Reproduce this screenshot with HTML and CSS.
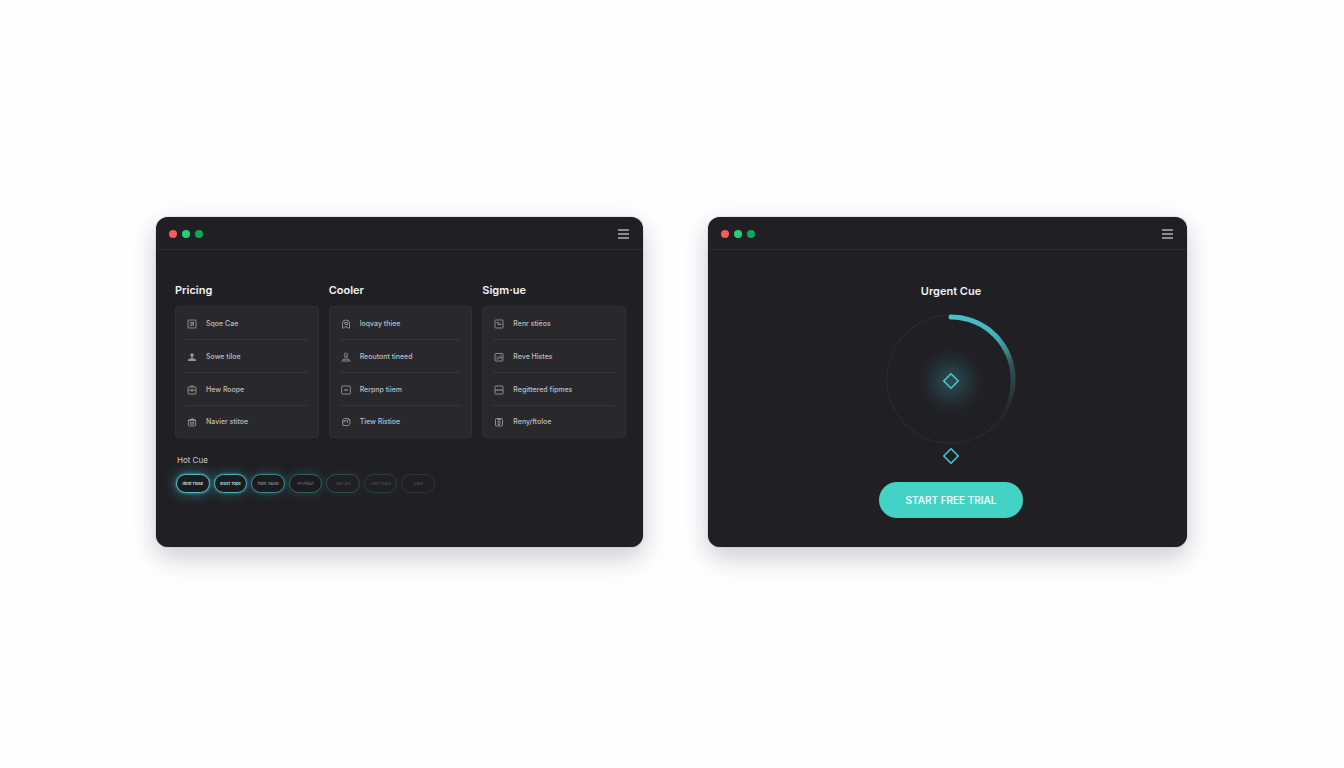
FILE: index.html
```html
<!DOCTYPE html>
<html lang="en">
<head>
<meta charset="utf-8">
<meta name="viewport" content="width=device-width, initial-scale=1">
<title>Hot Cue</title>
<link rel="stylesheet" href="styles.css">
</head>
<body>
<main class="stage">
  <section class="window">
    <header class="titlebar">
      <span class="dot dot-red"></span><span class="dot dot-green"></span><span class="dot dot-dark"></span>
      <button class="menu" aria-label="Menu"><svg viewBox="0 0 11 10"><path d="M0 1h11M0 5h11M0 9h11"/></svg></button>
    </header>
    <div class="content">
      <div class="columns">
        <section class="column">
          <h2 class="heading">Pricing</h2>
          <ul class="card">
            <li class="row"><svg class="icon" viewBox="0 0 10 10"><rect x="1" y="1" width="8" height="8" rx="1"/><path d="M3 3.500h4M3 5h4M3 6.700h2M6.200 3v4"/></svg>Sqoe Cae</li>
            <li class="row"><svg class="icon" viewBox="0 0 10 10"><circle class="solid" cx="5" cy="3" r="1.800"/><path class="solid" d="M4.300 4h1.400v2.500H4.300zM1 9V8q0-1.500 2.500-1.500h3Q9 6.500 9 8v1z"/></svg>Sowe tiloe</li>
            <li class="row"><svg class="icon" viewBox="0 0 10 10"><rect x="1" y="2" width="8" height="7" rx="1"/><path d="M3.500 2V1h3v1M1 5.200h8M5 3.500V7"/></svg>Hew Roope</li>
            <li class="row"><svg class="icon" viewBox="0 0 10 10"><rect x="1.500" y="2.500" width="7" height="6.500" rx="1"/><path d="M1 3.500h8M4 2.500 5.500 1l1 1.500M3.500 5.500h3v1.700h-3z"/></svg>Navier stitoe</li>
          </ul>
        </section>
        <section class="column">
          <h2 class="heading">Cooler</h2>
          <ul class="card">
            <li class="row"><svg class="icon" viewBox="0 0 10 10"><path d="M1.500 9V4Q1.500 1 5 1t3.500 3v5H6.500L5 7 3.500 9zM3.500 5V3.500h3V5M4 5.500h3"/></svg>Ioqvay thiee</li>
            <li class="row"><svg class="icon" viewBox="0 0 10 10"><circle cx="5" cy="2.800" r="1.700"/><path d="M4 4.500v1.500M6 4.500v1.500M1 9q0-2 4-2t4 2z"/></svg>Reoutont tineed</li>
            <li class="row"><svg class="icon" viewBox="0 0 10 10"><rect x="0.700" y="1" width="8.600" height="8" rx="0.500"/><path d="M3 5h4M5 4.200v1.600"/></svg>Rerpnp tiiem</li>
            <li class="row"><svg class="icon" viewBox="0 0 10 10"><path d="M2 8.500 1.500 5Q1 2 3.500 1.500h4L9 3v3L7.500 8.500zM3 6V3.500h3.500V6M7 2l2 2"/></svg>Tiew Ristioe</li>
          </ul>
        </section>
        <section class="column">
          <h2 class="heading">Sigm·ue</h2>
          <ul class="card">
            <li class="row"><svg class="icon" viewBox="0 0 10 10"><rect x="1" y="1" width="8" height="8" rx="0.500"/><path d="M2.500 3.500h2M4 3v2.500h3.500M6 4v1.500"/></svg>Renr stiéos</li>
            <li class="row"><svg class="icon" viewBox="0 0 10 10"><rect x="1" y="1.500" width="8" height="7.500" rx="1"/><path d="M2.500 5h1.500M2.500 7h1.500l3.500-4M6 5.500h1.500V7"/></svg>Reve Histes</li>
            <li class="row"><svg class="icon" viewBox="0 0 10 10"><rect x="1" y="1" width="8" height="8" rx="0.500"/><path d="M1 5.200h8M3 4.500h1M6 4.500h1"/></svg>Regittered fipmes</li>
            <li class="row"><svg class="icon" viewBox="0 0 10 10"><rect x="1.500" y="1.500" width="7" height="7.500" rx="1"/><path d="M3.500 1v1.500h3V1M4 4v3.500M6 4v3.500M4 4h2M4 7.500h2M1 5h1M8 5h1"/></svg>Reny/ftoloe</li>
          </ul>
        </section>
      </div>
      <h3 class="subheading">Hot Cue</h3>
      <div class="pills">
        <button class="pill pill-1">Itent Tiuse</button>
        <button class="pill pill-2">Sreet Tope</button>
        <button class="pill pill-3">Ttent Tause</button>
        <button class="pill pill-4">Ht-Piiuot</button>
        <button class="pill pill-5">Swt Jns</button>
        <button class="pill pill-6">Lent Teaps</button>
        <button class="pill pill-7">Iowsi</button>
      </div>
    </div>
  </section>

  <section class="window">
    <header class="titlebar">
      <span class="dot dot-red"></span><span class="dot dot-green"></span><span class="dot dot-dark"></span>
      <button class="menu" aria-label="Menu"><svg viewBox="0 0 11 10"><path d="M0 1h11M0 5h11M0 9h11"/></svg></button>
    </header>
    <div class="cue">
      <h2 class="heading">Urgent Cue</h2>
      <svg class="dial" viewBox="0 0 130 130">
        <defs>
          <linearGradient id="arc" gradientUnits="userSpaceOnUse" x1="65" y1="0" x2="82" y2="130">
            <stop offset="0" stop-color="#46c3ca"/>
            <stop offset=".2" stop-color="#43b4bb"/>
            <stop offset=".32" stop-color="#3b8c94"/>
            <stop offset=".44" stop-color="#2f5259"/>
            <stop offset=".65" stop-color="#2a3a3f"/>
            <stop offset=".9" stop-color="#25292d" stop-opacity="0"/>
          </linearGradient>
          <radialGradient id="glow">
            <stop offset="0" stop-color="#2c5d65" stop-opacity=".8"/>
            <stop offset=".4" stop-color="#284a53" stop-opacity=".55"/>
            <stop offset=".7" stop-color="#24363e" stop-opacity=".3"/>
            <stop offset="1" stop-color="#202026" stop-opacity="0"/>
          </radialGradient>
        </defs>
        <circle cx="65" cy="67" r="38" fill="url(#glow)"/>
        <circle class="track" cx="65" cy="65" r="64"/>
        <path d="M65 .5A64.500 64.500 0 0 1 97.200 120.900A66 66 0 0 0 124.500 65A59.500 59.500 0 0 0 65 5.500A2.500 2.500 0 0 1 65 .5Z" fill="url(#arc)"/>
        <path class="diamond" d="M65 59.800 72.200 67 65 74.200 57.800 67Z"/>
      </svg>
      <svg class="marker" viewBox="0 0 16 16"><path class="diamond" d="M8 .8 15.200 8 8 15.200.8 8Z"/></svg>
      <button class="trial">START FREE TRIAL</button>
    </div>
  </section>
</main>
</body>
</html>
```
FILE: styles.css
```css
* { box-sizing: border-box; }

body {
  margin: 0;
  background: #fefdff;
  font-family: Inter, "Liberation Sans", sans-serif;
  color: #f2f2f4;
}

button {
  margin: 0;
  padding: 0;
  border: 0;
  background: none;
  font-family: inherit;
  cursor: pointer;
}

.stage {
  min-height: 100vh;
  padding: 40px 157px 44px 156px;
  display: grid;
  grid-template-columns: 487fr 479fr;
  gap: 65px;
  align-items: center;
}

.window {
  min-height: 330px;
  border-radius: 12px;
  background: #201f24;
  box-shadow: 0 0 1px #55545a, 0 12px 24px rgba(40, 30, 45, .17), 0 4px 30px rgba(40, 30, 45, .06);
}

.titlebar {
  height: 33px;
  padding: 1px 14px 0 13px;
  display: flex;
  align-items: center;
  gap: 5px;
  border-bottom: 1px solid #2c2b30;
}

.dot {
  width: 8px;
  height: 8px;
  border-radius: 50%;
}

.dot-red { background: #f45b58; }
.dot-green { background: #1fd275; }
.dot-dark { background: #10a658; }

.menu {
  margin-left: auto;
  width: 11px;
  height: 10px;
}

.menu svg {
  display: block;
  stroke: #b0b0b3;
  stroke-width: 1.4;
}

.content { padding: 32px 17px 24px 19px; }

.columns {
  display: grid;
  grid-template-columns: repeat(3, 1fr);
  gap: 10px;
}

.heading {
  margin: 0 0 8px;
  font-size: 11px;
  line-height: 16px;
  font-weight: 600;
}

.card {
  margin: 0;
  padding: 0 10px;
  list-style: none;
  border: 1px solid #302f35;
  border-radius: 4px;
  background: #29282d;
}

.row {
  height: 33px;
  padding: 1px 0 0 1px;
  display: flex;
  align-items: center;
  gap: 9px;
  border-bottom: 1px solid #37363b;
  font-size: 7px;
  line-height: 10px;
  font-weight: 500;
  color: #bebec0;
  white-space: nowrap;
}

.row:last-child {
  height: 31px;
  border-bottom: 0;
}

.icon {
  width: 10px;
  height: 10px;
  fill: none;
  stroke: #96969a;
  stroke-width: .9;
}

.icon .solid { fill: #96969a; stroke: none; }

.subheading {
  margin: 16px 0 8px 2px;
  font-size: 8px;
  line-height: 12px;
  font-weight: 400;
  color: #cecfd2;
}

.pills {
  margin-left: 1px;
  max-width: 259px;
  display: grid;
  grid-template-columns: repeat(7, 1fr);
  gap: 4px;
}

.pill {
  height: 19px;
  border: 1px solid #2c3439;
  border-radius: 10px;
  background: #1c1b20;
  font-size: 4px;
  line-height: 6px;
  color: #58585c;
  white-space: nowrap;
}

.pill-1 { border-color: #54bdc3; color: #d5eeee; font-weight: 600; box-shadow: 0 0 3px #3aa0a6, 0 0 14px rgba(45, 165, 170, .7); }
.pill-2 { border-color: #4bb1b6; color: #bce0df; font-weight: 600; box-shadow: 0 0 3px #31888d, 0 0 13px rgba(45, 155, 160, .5); }
.pill-3 { border-color: #3c878d; color: #a0b2b3; box-shadow: 0 0 3px #2a6469, 0 0 12px rgba(45, 145, 150, .4); }
.pill-4 { border-color: #316166; color: #7b8284; box-shadow: 0 0 11px rgba(45, 135, 130, .4); }
.pill-5 { border-color: #2e4c50; background: #201f24; box-shadow: 0 0 8px rgba(45, 105, 110, .25); }
.pill-6 { border-color: #2a3d41; background: #201f24; box-shadow: 0 0 6px rgba(45, 105, 110, .15); }
.pill-7 { background: #201f24; box-shadow: 0 0 6px rgba(45, 105, 110, .1); }

.cue {
  padding: 33px 0 24px 7px;
  display: flex;
  flex-direction: column;
  align-items: center;
}

.cue .heading { margin-bottom: 15px; }

.dial {
  width: 130px;
  height: 130px;
}

.track {
  fill: none;
  stroke: #28282d;
  stroke-width: 1.5;
}

.diamond {
  fill: none;
  stroke: #48c7cc;
  stroke-width: 1.6;
}

.marker {
  width: 16px;
  height: 16px;
  margin: 4px 0 18px;
}

.trial {
  width: 144px;
  height: 36px;
  border-radius: 18px;
  background: #43d3c5;
  color: #e9fffc;
  font-size: 10px;
  line-height: 16px;
  font-weight: 600;
}
```
